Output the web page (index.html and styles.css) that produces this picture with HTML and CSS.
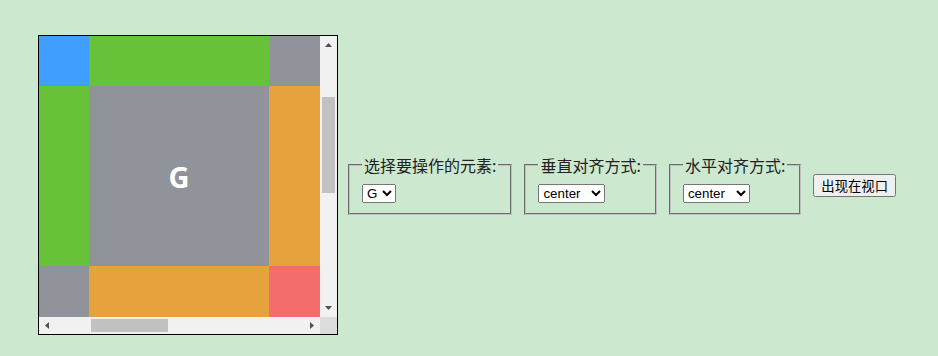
FILE: index.html
```html
<!DOCTYPE html>
<html lang="zh-CN">
<head>
<meta charset="utf-8">
<title>scrollIntoView</title>
<link rel="stylesheet" href="styles.css">
</head>
<body>
<div class="page">
  <div class="scrollbox">
    <div class="viewport" id="viewport">
      <div class="grid">
        <div class="cell c0">A</div><div class="cell c1">B</div><div class="cell c2">C</div><div class="cell c3">D</div><div class="cell c4">E</div>
        <div class="cell c1">F</div><div class="cell c2" id="target">G</div><div class="cell c3">H</div><div class="cell c4">I</div><div class="cell c0">J</div>
        <div class="cell c2">K</div><div class="cell c3">L</div><div class="cell c4">M</div><div class="cell c0">N</div><div class="cell c1">O</div>
        <div class="cell c3">P</div><div class="cell c4">Q</div><div class="cell c0">R</div><div class="cell c1">S</div><div class="cell c2">T</div>
      </div>
    </div>
    <div class="vbar">
      <svg class="arrow" width="17" height="17" viewBox="0 0 17 17"><path d="M5 11H12L8.5 7Z" fill="#505050"/></svg>
      <div class="vtrack"><div class="vthumb"></div></div>
      <svg class="arrow" width="17" height="17" viewBox="0 0 17 17"><path d="M5 6H12L8.5 10Z" fill="#505050"/></svg>
    </div>
    <div class="hbar">
      <svg class="arrow" width="17" height="17" viewBox="0 0 17 17"><path d="M10 5V12L6 8.5Z" fill="#505050"/></svg>
      <div class="htrack"><div class="hthumb"></div></div>
      <svg class="arrow" width="17" height="17" viewBox="0 0 17 17"><path d="M7 5V12L11 8.5Z" fill="#505050"/></svg>
    </div>
    <div class="corner"></div>
  </div>
  <div class="controls">
    <fieldset class="group">
      <legend>选择要操作的元素:</legend>
      <select class="sel">
        <option>A</option><option>B</option><option>C</option><option>D</option><option>E</option>
        <option>F</option><option selected>G</option><option>H</option><option>I</option><option>J</option>
        <option>K</option><option>L</option><option>M</option><option>N</option><option>O</option>
        <option>P</option><option>Q</option><option>R</option><option>S</option><option>T</option>
      </select>
    </fieldset>
    <fieldset class="group">
      <legend>垂直对齐方式:</legend>
      <select class="sel">
        <option>start</option><option selected>center</option><option>end</option><option>nearest</option>
      </select>
    </fieldset>
    <fieldset class="group">
      <legend>水平对齐方式:</legend>
      <select class="sel">
        <option>start</option><option selected>center</option><option>end</option><option>nearest</option>
      </select>
    </fieldset>
    <button class="btn" type="button">出现在视口</button>
  </div>
</div>
<script src="script.js"></script>
</body>
</html>
```

FILE: styles.css
```css
html, body {
  margin: 0;
  background: #cce8cf;
}

.page {
  display: flex;
  align-items: center;
  padding: 35px 0 0 38px;
  font-family: "Noto Sans CJK SC", "Noto Sans", sans-serif;
  color: #222;
}

/* scroll box with Windows-like scrollbars */
.scrollbox {
  display: grid;
  grid-template-columns: 281px 17px;
  grid-template-rows: 281px 17px;
  border: 1px solid #000;
  flex: none;
}

.viewport {
  overflow: hidden;
}

.grid {
  display: grid;
  grid-template-columns: repeat(5, 180px);
  grid-template-rows: repeat(4, 180px);
  width: 900px;
}

.cell {
  display: flex;
  align-items: center;
  justify-content: center;
  color: #fff;
  font-family: "Open Sans", "Noto Sans", sans-serif;
  font-weight: 700;
  font-size: 29px;
}

.c0 { background: #409eff; }
.c1 { background: #67c23a; }
.c2 { background: #909399; }
.c3 { background: #e6a23c; }
.c4 { background: #f56c6c; }

.vbar, .hbar {
  display: flex;
  background: #f1f1f1;
}
.vbar { flex-direction: column; }

.arrow {
  display: block;
  flex: none;
}

.vtrack, .htrack {
  flex: 1;
  display: flex;
}
.vtrack { flex-direction: column; padding: 0 2px; }
.htrack { padding: 2px 0; }

.vthumb {
  height: 96px;
  margin-top: 44px;
  background: #c1c1c1;
}
.hthumb {
  width: 77px;
  margin-left: 35px;
  background: #c1c1c1;
}

.corner {
  background: #dcdcdc;
}

.controls {
  display: flex;
  align-items: center;
  gap: 12px;
  margin-left: 10px;
}

.group {
  margin: 0;
  padding: 5.6px 12px 10px;
  font-size: 16px;
  line-height: 21px;
  border: 2px groove #c0c0c0;
}

.group legend {
  padding: 0 2px;
  line-height: 21px;
}

.sel {
  font-family: "Liberation Sans", Arial, sans-serif;
  font-size: 13.333px;
  color: #000;
}

.btn {
  font-family: "Noto Sans CJK SC", sans-serif;
  font-size: 13.333px;
  line-height: 17px;
  padding: 1px 6px;
  color: #000;
}
```

FILE: script.js
```js
var viewport = document.getElementById('viewport');
viewport.scrollLeft = 130;
viewport.scrollTop = 130;
```
